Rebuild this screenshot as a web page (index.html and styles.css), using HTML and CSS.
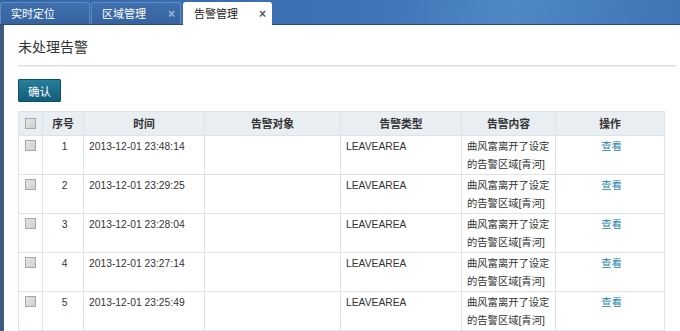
FILE: index.html
```html
<!DOCTYPE html>
<html>
<head>
  <title>告警管理</title>
  <meta charset="UTF-8">
  <link rel="stylesheet" href="styles.css">
</head>
<body>
  <div class="tabs">
    <div class="tab">实时定位</div>
    <div class="tab">区域管理<span class="close">×</span></div>
    <div class="tab active">告警管理<span class="close">×</span></div>
  </div>

  <div class="page">
    <h2 class="title">未处理告警</h2>
    <button class="btn">确认</button>

    <table class="grid">
      <thead>
        <tr>
          <th class="c-check"><span class="box"></span></th>
          <th class="c-no">序号</th>
          <th class="c-time">时间</th>
          <th class="c-obj">告警对象</th>
          <th class="c-type">告警类型</th>
          <th class="c-msg">告警内容</th>
          <th class="c-op">操作</th>
        </tr>
      </thead>
      <tbody>
        <tr>
          <td class="c-check"><span class="box"></span></td>
          <td class="c-no">1</td>
          <td>2013-12-01 23:48:14</td>
          <td></td>
          <td>LEAVEAREA</td>
          <td>曲风富离开了设定的告警区域[青河]</td>
          <td class="c-op"><a href="#">查看</a></td>
        </tr>
        <tr>
          <td class="c-check"><span class="box"></span></td>
          <td class="c-no">2</td>
          <td>2013-12-01 23:29:25</td>
          <td></td>
          <td>LEAVEAREA</td>
          <td>曲风富离开了设定的告警区域[青河]</td>
          <td class="c-op"><a href="#">查看</a></td>
        </tr>
        <tr>
          <td class="c-check"><span class="box"></span></td>
          <td class="c-no">3</td>
          <td>2013-12-01 23:28:04</td>
          <td></td>
          <td>LEAVEAREA</td>
          <td>曲风富离开了设定的告警区域[青河]</td>
          <td class="c-op"><a href="#">查看</a></td>
        </tr>
        <tr>
          <td class="c-check"><span class="box"></span></td>
          <td class="c-no">4</td>
          <td>2013-12-01 23:27:14</td>
          <td></td>
          <td>LEAVEAREA</td>
          <td>曲风富离开了设定的告警区域[青河]</td>
          <td class="c-op"><a href="#">查看</a></td>
        </tr>
        <tr>
          <td class="c-check"><span class="box"></span></td>
          <td class="c-no">5</td>
          <td>2013-12-01 23:25:49</td>
          <td></td>
          <td>LEAVEAREA</td>
          <td>曲风富离开了设定的告警区域[青河]</td>
          <td class="c-op"><a href="#">查看</a></td>
        </tr>
      </tbody>
    </table>
  </div>
</body>
</html>
```

FILE: styles.css
```css
html, body {
  margin: 0;
  height: 100%;
  overflow: hidden;
}
body {
  font-family: "Liberation Sans", "Noto Sans CJK SC", sans-serif;
  font-size: 10.3px;
  color: #333;
  background: #fff;
}
.tabs {
  display: flex;
  align-items: flex-end;
  gap: 1px;
  height: 25px;
  background: linear-gradient(100deg, #3566a8 0%, #3f74b6 55%, #5088c6 75%, #3f74b5 100%);
  border-bottom: 1px solid #2b4d7e;
  box-sizing: border-box;
}
.tab {
  position: relative;
  width: 90px;
  height: 22px;
  line-height: 22px;
  padding-left: 10px;
  box-sizing: border-box;
  font-size: 11px;
  color: #fff;
  background: linear-gradient(#3f6fae, #36639f);
  border: 1px solid #5f8bc4;
  border-bottom: none;
  border-radius: 3px 3px 0 0;
}
.tab.active {
  width: 89px;
  height: 23px;
  margin-left: 1px;
  margin-bottom: -1px;
  background: #fff;
  color: #222;
  border-color: #fff;
}
.close {
  position: absolute;
  right: 5px;
  top: 0;
  font-size: 12px;
  font-weight: bold;
  color: #9fb8d8;
}
.tab.active .close {
  color: #4a5868;
}
.page {
  height: calc(100% - 25px);
  border-left: 4px solid #3e5a80;
  padding: 0 4px 0 14px;
}
.title {
  margin: 0;
  padding: 12px 0 8px;
  font-size: 14px;
  font-weight: normal;
  color: #333;
  line-height: 20px;
  border-bottom: 1px solid #dcdcdc;
  box-shadow: 0 1px 0 #f2f2f2;
}
.btn {
  display: block;
  margin: 13px 0 9px;
  width: 43px;
  height: 23px;
  padding: 0;
  font-family: inherit;
  font-size: 11.5px;
  color: #fff;
  background: linear-gradient(#267f9c, #135e7a);
  border: 1px solid #0f4f68;
  border-radius: 1px;
}
.grid {
  width: 647px;
  border-collapse: collapse;
  table-layout: fixed;
}
.grid th, .grid td {
  border: 1px solid #dfe3e6;
  text-align: left;
  vertical-align: top;
  padding: 2px 2px 0 5px;
  line-height: 18px;
}
.grid th {
  height: 23px;
  padding: 0;
  vertical-align: middle;
  text-align: center;
  font-size: 10.8px;
  background: #e9eef2;
  font-weight: bold;
  color: #333;
}
.grid tbody tr {
  height: 39px;
}
.grid .c-check {
  width: 23px;
  padding: 4px 0 0;
  text-align: center;
  line-height: 10px;
}
.grid th.c-check {
  padding: 0;
}
.c-no { width: 40px; }
.c-time { width: 120px; }
.c-obj { width: 135px; }
.c-type { width: 120px; }
.c-msg { width: 93px; }
.grid td.c-no, .grid td.c-op {
  text-align: center;
}
.box {
  display: inline-block;
  width: 9px;
  height: 9px;
  border: 1px solid #a8a8a8;
  background: linear-gradient(135deg, #e6e6e6, #cfcfcf);
  vertical-align: top;
}
.c-op a {
  color: #2a86ab;
  text-decoration: none;
}
```
